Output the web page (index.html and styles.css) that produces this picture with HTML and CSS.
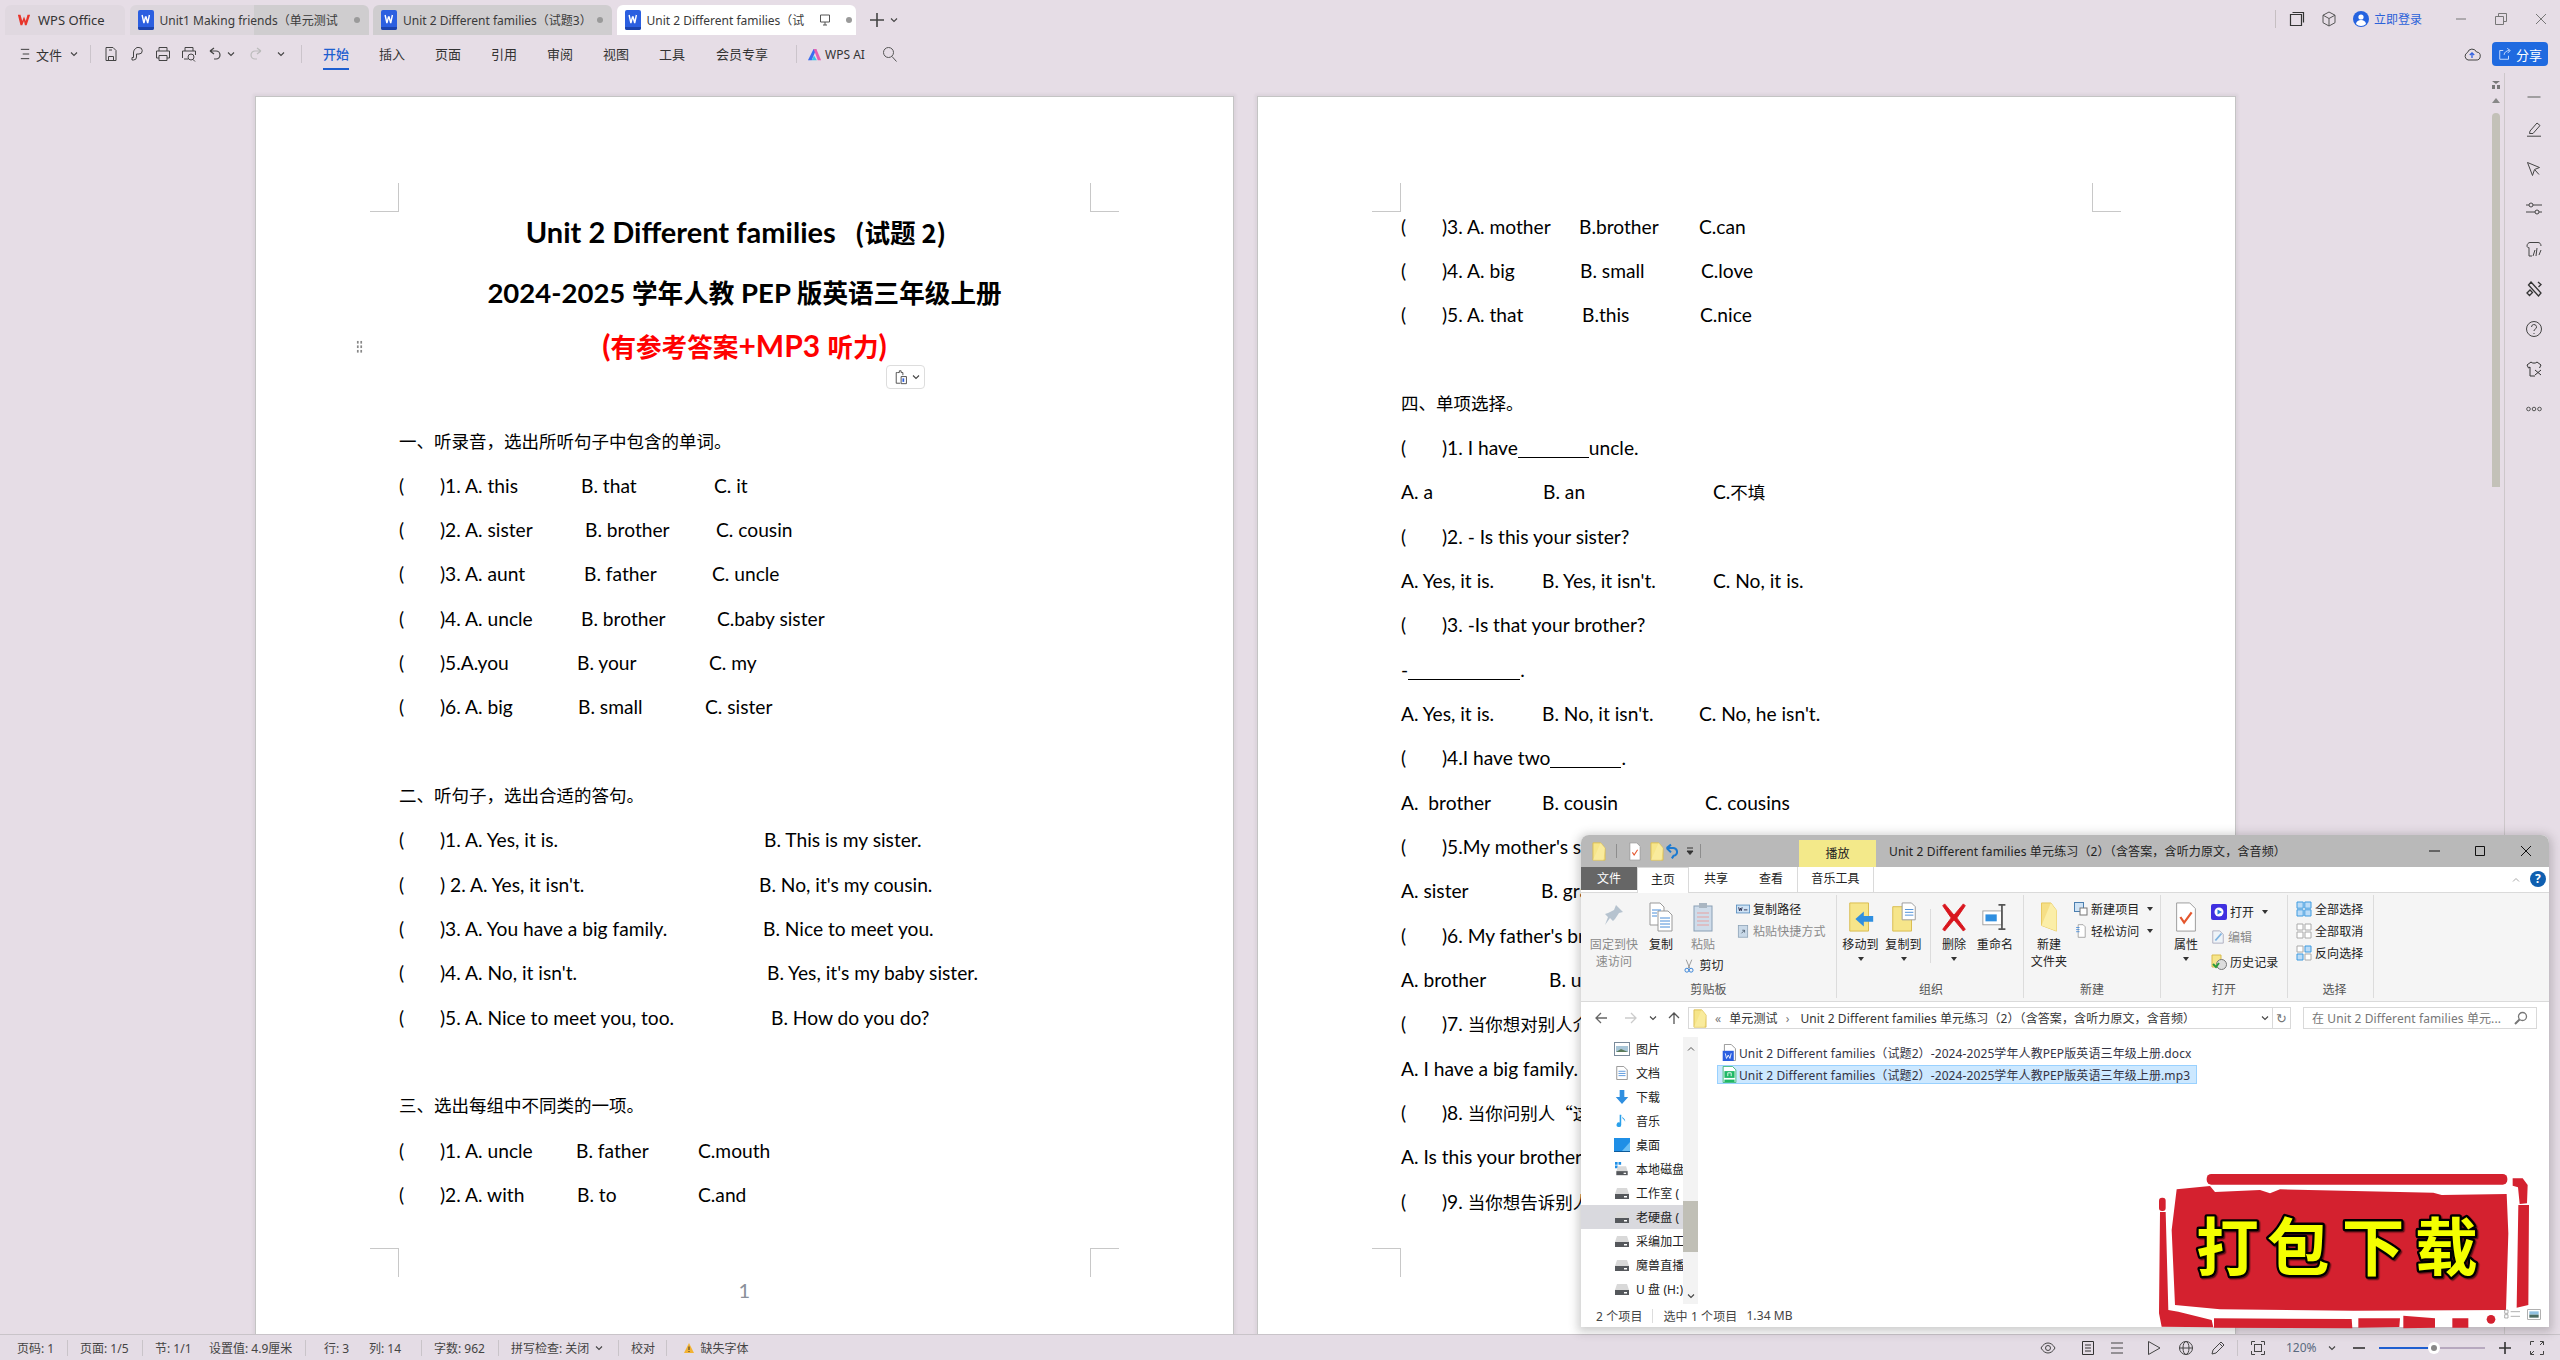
FILE: index.html
```html
<!DOCTYPE html>
<html lang="zh-CN">
<head>
<meta charset="utf-8">
<title>WPS Office</title>
<link rel="stylesheet" href="styles.css">
</head>
<body>
<svg class="defs" width="0" height="0" aria-hidden="true">
  <symbol id="word" viewBox="0 0 16 20"><path d="M2 0h12a2 2 0 0 1 2 2v16a2 2 0 0 1-2 2H2a2 2 0 0 1-2-2V2a2 2 0 0 1 2-2z" fill="#2b5fe0"/><path d="M0 17h16v1a2 2 0 0 1-2 2H2a2 2 0 0 1-2-2z" fill="#1b43ad"/><path d="M3.500 5l1.800 8 1.600-6h.6l1.600 6 1.700-8" transform="translate(.6 0)" fill="none" stroke="#fff" stroke-width="1.400"/></symbol>
  <symbol id="fold" viewBox="0 0 16 22"><path d="M1 1h9l5 6v14H1z" fill="#f6e58a" stroke="#d9bb4c"/><path d="M10 1l5 6-2 14H1" fill="#fbeea8" opacity=".6"/></symbol>
  <symbol id="drive" viewBox="0 0 16 14"><path d="M3 2h10l2 6H1z" fill="#d9d9d9"/><rect x="1" y="8" width="14" height="5" fill="#55585c"/><rect x="10" y="10" width="3" height="1.500" fill="#fff"/></symbol>
  <symbol id="chev" viewBox="0 0 8 8"><path d="M1 2.500l3 3 3-3" fill="none" stroke="#444" stroke-width="1.100"/></symbol>
  <symbol id="grid" viewBox="0 0 16 16"><path d="M1 1h6.200v6.200H1zM8.800 1H15v6.200H8.800zM1 8.800h6.200V15H1zM8.800 8.800H15V15H8.800z" fill="#bcdcf7" stroke="#3f9be0"/></symbol>
</svg>

<div class="app">
  <header class="tabbar">
    <div class="tab home"><svg class="i14" viewBox="0 0 16 14"><path d="M1 1h3l2 7 2-5 2 5 2-7h3l-4 12h-2L8 8l-2 5H4z" fill="#e8352b"/></svg><span>WPS Office</span></div>
    <div class="tab doc dim fade"><svg class="wicon"><use href="#word"/></svg><span class="tabtext">Unit1 Making friends（单元测试</span><i class="dot"></i></div>
    <div class="tab doc dim"><svg class="wicon"><use href="#word"/></svg><span class="tabtext">Unit 2 Different families（试题3）</span><i class="dot"></i></div>
    <div class="tab doc active"><svg class="wicon"><use href="#word"/></svg><span class="tabtext short">Unit 2 Different families（试</span><svg class="i12 mon" viewBox="0 0 12 12"><path d="M1.500 1h9v7h-9zM4 11h4M6 8v3" fill="none" stroke="#555"/></svg><i class="dot"></i></div>
    <svg class="plus" viewBox="0 0 16 16"><path d="M8 1v14M1 8h14" stroke="#444" stroke-width="1.600"/></svg>
    <svg class="i8 chevgap"><use href="#chev"/></svg>
    <div class="tabright">
      <i class="vsep"></i>
      <svg class="i16" viewBox="0 0 16 16"><path d="M1.500 3.500h11v11h-11zM3.500 1.500h11v10" fill="none" stroke="#333" stroke-width="1.200"/></svg>
      <svg class="i16" viewBox="0 0 16 16"><path d="M8 1l6 3.200v7.500L8 15l-6-3.300V4.200zM2 4.200L8 7.500l6-3.300M8 7.500V15" fill="none" stroke="#555" stroke-width="1"/></svg>
      <svg class="avatar" viewBox="0 0 16 16"><circle cx="8" cy="8" r="8" fill="#2563e0"/><circle cx="8" cy="6" r="2.600" fill="#fff"/><path d="M3 13c.5-3 2.500-4 5-4s4.500 1 5 4a7 7 0 0 1-10 0z" fill="#fff"/></svg>
      <span class="login">立即登录</span>
      <svg class="i14 win1" viewBox="0 0 14 14"><path d="M2 7h10" stroke="#777"/></svg>
      <svg class="i14 win2" viewBox="0 0 14 14"><path d="M1.500 4.500h8v8h-8zM4.500 4.500v-3h8v8h-3" fill="none" stroke="#777"/></svg>
      <svg class="i14 win3" viewBox="0 0 14 14"><path d="M2 2l10 10M12 2L2 12" stroke="#777"/></svg>
    </div>
  </header>

  <nav class="toolbar">
    <svg class="i14 ham" viewBox="0 0 14 14"><path d="M2 2h9M4 7h7M2 12h9" stroke="#333"/></svg>
    <span class="file">文件</span><svg class="i8 filechev"><use href="#chev"/></svg>
    <i class="tsep s1"></i>
    <span class="qa"><svg class="i16" viewBox="0 0 16 16"><path d="M3 1.500h7l3 3v10H3zM5.500 14.500v-4h5v4M6 4h3" fill="none" stroke="#444"/></svg></span>
    <span class="qa"><svg class="i16" viewBox="0 0 16 16"><path d="M8 1.500h2a3 3 0 0 1 0 6.500H7.500v3a3 3 0 0 1-3 3H3v-2.500h1.500V8a6.500 6.500 0 0 1 3.500-6.500z" fill="none" stroke="#444"/></svg></span>
    <span class="qa"><svg class="i16" viewBox="0 0 16 16"><path d="M4 5V1.500h8V5M1.500 5h13v7H12M4 12H1.500V5M4 9.500h8v5H4z" fill="none" stroke="#444"/></svg></span>
    <span class="qa"><svg class="i16" viewBox="0 0 16 16"><path d="M4 5V1.500h8V5M1.500 12V5h13v4M7 13H3" fill="none" stroke="#444"/><circle cx="10" cy="11" r="3" fill="none" stroke="#444"/><path d="M12 13.500l2 2" stroke="#444"/></svg></span>
    <span class="qa"><svg class="i16" viewBox="0 0 16 16"><path d="M3 5l4-3M3 5l4 3M3 5h6a4 4 0 0 1 0 8H7" fill="none" stroke="#444" stroke-width="1.200"/></svg></span>
    <svg class="i8 uc"><use href="#chev"/></svg>
    <span class="qa r"><svg class="i16" viewBox="0 0 16 16"><path d="M13 5L9 2M13 5L9 8M13 5H7a4 4 0 0 0 0 8h2" fill="none" stroke="#bbb" stroke-width="1.200"/></svg></span>
    <svg class="i8 mc"><use href="#chev"/></svg>
    <i class="tsep s2"></i>
    <span class="rt on">开始</span><span class="rt">插入</span><span class="rt">页面</span><span class="rt">引用</span><span class="rt">审阅</span><span class="rt">视图</span><span class="rt">工具</span><span class="rt wide">会员专享</span>
    <i class="tsep s3"></i>
    <svg class="ailogo" viewBox="0 0 16 16"><path d="M1 14L7 2h3L5 14z" fill="#3b6cf0"/><path d="M7 2h3l5 12h-3.500z" fill="#e65fb0"/><path d="M5 14l2.500-5 3 5z" fill="#36c3e8"/></svg>
    <span class="ai">WPS AI</span>
    <svg class="i16 find" viewBox="0 0 16 16"><circle cx="6.500" cy="6.500" r="5" fill="none" stroke="#555"/><path d="M10 10.500l4.500 5" stroke="#555"/></svg>
    <div class="tbright">
      <svg class="cloud" viewBox="0 0 18 14"><path d="M5 13a4 4 0 0 1-.5-7.500A4.800 4.800 0 0 1 13.500 5 4 4 0 0 1 13 13z" fill="none" stroke="#444"/><path d="M9 11V6M6.800 8L9 5.800 11.200 8" fill="none" stroke="#3060e0" stroke-width="1.300"/></svg>
      <button class="share" type="button"><svg class="i14" viewBox="0 0 16 14"><path d="M6 3H2v10h10V9M7 8c0-3 3-5 6-5M10.500 .5L14 3l-3 3" fill="none" stroke="#dbe8ff"/></svg>分享</button>
    </div>
  </nav>

  <main class="work">
    <div class="canvas">
      <article class="page p1">
        <i class="mk tl"></i><i class="mk tr"></i><i class="mk bl"></i><i class="mk br"></i>
        <h1 class="t1">Unit 2 Different families<span class="zhb paren">(试题 2)</span></h1>
        <h2 class="t2">2024-2025 <span class="zhb">学年人教</span> PEP <span class="zhb">版英语三年级上册</span></h2>
        <h3 class="t3">(<span class="zhb">有参考答案</span>+MP3 <span class="zhb">听力</span>)</h3>
        <div class="lines first">
          <p class="row zh">一、听录音，选出所听句子中包含的单词。</p>
          <p class="row"><b class="o">(</b><span class="w141">)1. A. this</span><span class="w133">B. that</span><span>C. it</span></p>
          <p class="row"><b class="o">(</b><span class="w145">)2. A. sister</span><span class="w131">B. brother</span><span>C. cousin</span></p>
          <p class="row"><b class="o">(</b><span class="w144">)3. A. aunt</span><span class="w128">B. father</span><span>C. uncle</span></p>
          <p class="row"><b class="o">(</b><span class="w141">)4. A. uncle</span><span class="w136">B. brother</span><span>C.baby sister</span></p>
          <p class="row"><b class="o">(</b><span class="w137">)5.A.you</span><span class="w132">B. your</span><span>C. my</span></p>
          <p class="row"><b class="o">(</b><span class="w138">)6. A. big</span><span class="w127">B. small</span><span>C. sister</span></p>
          <p class="row"></p>
          <p class="row zh">二、听句子，选出合适的答句。</p>
          <p class="row"><b class="o">(</b><span class="w324">)1. A. Yes, it is.</span><span>B. This is my sister.</span></p>
          <p class="row"><b class="o">(</b><span class="w319">) 2. A. Yes, it isn't.</span><span>B. No, it's my cousin.</span></p>
          <p class="row"><b class="o">(</b><span class="w323">)3. A. You have a big family.</span><span>B. Nice to meet you.</span></p>
          <p class="row"><b class="o">(</b><span class="w327">)4. A. No, it isn't.</span><span>B. Yes, it's my baby sister.</span></p>
          <p class="row"><b class="o">(</b><span class="w331">)5. A. Nice to meet you, too.</span><span>B. How do you do?</span></p>
          <p class="row"></p>
          <p class="row zh">三、选出每组中不同类的一项。</p>
          <p class="row"><b class="o">(</b><span class="w136">)1. A. uncle</span><span class="w122">B. father</span><span>C.mouth</span></p>
          <p class="row"><b class="o">(</b><span class="w137">)2. A. with</span><span class="w121">B. to</span><span>C.and</span></p>
        </div>
        <span class="pageno">1</span>
        <i class="grip"></i>
        <button class="pastebtn" type="button"><svg class="i16" viewBox="0 0 16 18"><path d="M3 4h2V2h2v2h2v3M6 16H1.500V4H3M7 8.500h6v8H7z" fill="none" stroke="#444"/><path d="M9.500 10.500v4" stroke="#2b5fe0" stroke-width="2"/></svg><svg class="i8"><use href="#chev"/></svg></button>
      </article>

      <article class="page p2">
        <i class="mk tl"></i><i class="mk tr"></i><i class="mk bl"></i>
        <div class="lines">
          <p class="row"><b class="o">(</b><span class="w137">)3. A. mother</span><span class="w120">B.brother</span><span>C.can</span></p>
          <p class="row"><b class="o">(</b><span class="w138">)4. A. big</span><span class="w121">B. small</span><span>C.love</span></p>
          <p class="row"><b class="o">(</b><span class="w140">)5. A. that</span><span class="w118">B.this</span><span>C.nice</span></p>
          <p class="row"></p>
          <p class="row zh">四、单项选择。</p>
          <p class="row"><b class="o">(</b><span>)1. I have<u class="blank b71"></u>uncle.</span></p>
          <p class="row"><span class="w142">A. a</span><span class="w170">B. an</span><span>C.<span class="zh">不填</span></span></p>
          <p class="row"><b class="o">(</b><span>)2. - Is this your sister?</span></p>
          <p class="row"><span class="w141">A. Yes, it is.</span><span class="w171">B. Yes, it isn't.</span><span>C. No, it is.</span></p>
          <p class="row"><b class="o">(</b><span>)3. -Is that your brother?</span></p>
          <p class="row"><span>-<u class="blank b112"></u>.</span></p>
          <p class="row"><span class="w141">A. Yes, it is.</span><span class="w157">B. No, it isn't.</span><span>C. No, he isn't.</span></p>
          <p class="row"><b class="o">(</b><span>)4.I have two<u class="blank b71"></u>.</span></p>
          <p class="row"><span class="w141">A.&nbsp; brother</span><span class="w163">B. cousin</span><span>C. cousins</span></p>
          <p class="row"><b class="o">(</b><span>)5.My mother's sister is my</span></p>
          <p class="row"><span class="w140">A. sister</span><span>B. grandmother</span></p>
          <p class="row"><b class="o">(</b><span>)6. My father's brother is my</span></p>
          <p class="row"><span class="w148">A. brother</span><span>B. uncle</span></p>
          <p class="row"><b class="o">(</b><span>)7. <span class="zh">当你想对别人介绍</span></span></p>
          <p class="row"><span>A. I have a big family.</span></p>
          <p class="row"><b class="o">(</b><span>)8. <span class="zh">当你问别人“这</span></span></p>
          <p class="row"><span>A. Is this your brother?</span></p>
          <p class="row"><b class="o">(</b><span>)9. <span class="zh">当你想告诉别人</span></span></p>
        </div>
      </article>
    </div>

    <div class="vscroll">
      <svg class="i8 vs1" viewBox="0 0 8 8"><path d="M0 0h8L4 3zM0 4h3v4H0zM5 4h3v4H5z" fill="#777"/></svg>
      <svg class="i8 vs2" viewBox="0 0 8 8"><path d="M4 1l4 5H0z" fill="#888"/></svg>
      <i class="thumb"></i>
    </div>

    <aside class="rail">
      <svg class="ri dash" viewBox="0 0 16 16"><path d="M1.500 8h13" stroke="#888" stroke-width="1.500"/></svg>
      <svg class="ri" viewBox="0 0 16 16"><path d="M4 10l7-8 3 2.500-7 8H3.500zM1 15.200h14" fill="none" stroke="#444"/></svg>
      <svg class="ri" viewBox="0 0 16 16"><path d="M1.500 1.500l12 5-5 2-2 6z M9 9l4 4.500" fill="none" stroke="#444"/></svg>
      <svg class="ri" viewBox="0 0 16 16"><circle cx="5" cy="4" r="2" fill="none" stroke="#444"/><circle cx="11" cy="11" r="2" fill="none" stroke="#444"/><path d="M0 4h3M7 4h9M0 11h9M13 11h3" stroke="#444"/></svg>
      <svg class="ri" viewBox="0 0 16 16"><path d="M1 5c0-2 1.500-3.500 3-3.500h8c1.500 0 3 1 3 3.500M1 5c0 1 1 2 2 1.500V15h3M7 15l2-6M10 15l1-8M13 14l2-5" fill="none" stroke="#444"/></svg>
      <svg class="ri" viewBox="0 0 16 16"><path d="M5 1l10 11-2.500 3L2.500 4zM1 12l3-3 2.500 2.500-3 3zM12 1l3 2.500-2.500 2.500" fill="none" stroke="#333" stroke-width="1.300"/></svg>
      <svg class="ri" viewBox="0 0 16 16"><circle cx="8" cy="8" r="7.500" fill="none" stroke="#444"/><path d="M5.500 6a2.500 2.500 0 1 1 3.500 2.300c-.7.4-1 .8-1 1.700M8 12v1" fill="none" stroke="#444"/></svg>
      <svg class="ri" viewBox="0 0 16 16"><path d="M5 1L1 4l1.500 3L4 6v9h5M11 1l4 3-1.500 3M5 1c1 1.500 5 1.500 6 0" fill="none" stroke="#333"/><path d="M9 9l6 5M15 9l-6 5" stroke="#333"/></svg>
      <svg class="ri" viewBox="0 0 16 16"><g fill="none" stroke="#555"><circle cx="2.500" cy="8" r="1.800"/><circle cx="8" cy="8" r="1.800"/><circle cx="13.500" cy="8" r="1.800"/></g></svg>
    </aside>
  </main>

  <footer class="status">
    <span class="w50">页码: 1</span><i class="ss"></i><span class="w62">页面: 1/5</span><i class="ss"></i><span class="w54">节: 1/1</span><span class="w96">设置值: 4.9厘米</span><i class="ss m18"></i><span class="w45">行: 3</span><span class="w52">列: 14</span><i class="ss"></i><span class="w64">字数: 962</span><i class="ss"></i><span class="spell">拼写检查: 关闭<svg class="i8 stchev"><use href="#chev"/></svg></span><i class="ss"></i><span class="w35">校对</span><i class="ss"></i>
    <svg class="warn" viewBox="0 0 12 12"><path d="M6 1l5 10H1z" fill="#f2b233"/><path d="M6 4.500v3.500M6 9v1" stroke="#333"/></svg><span>缺失字体</span>
    <div class="stright">
      <svg class="si" viewBox="0 0 16 16"><path d="M1 8c2-3.500 4.500-5 7-5s5 1.500 7 5c-2 3.500-4.500 5-7 5s-5-1.500-7-5z" fill="none" stroke="#444"/><circle cx="8" cy="8" r="2.500" fill="none" stroke="#444"/></svg>
      <svg class="si sp24" viewBox="0 0 16 16"><path d="M2.500 1.500h11v13h-11zM5 5h6M5 8h6M5 11h6" fill="none" stroke="#333"/></svg>
      <svg class="si sp13" viewBox="0 0 16 16"><path d="M2 3h12M2 8h12M2 13h12" stroke="#444"/></svg>
      <svg class="si sp21" viewBox="0 0 16 16"><path d="M2.500 1.500L14 8 2.500 14.500z" fill="none" stroke="#444"/></svg>
      <svg class="si sp16" viewBox="0 0 16 16"><circle cx="8" cy="8" r="6.500" fill="none" stroke="#444"/><ellipse cx="8" cy="8" rx="3" ry="6.500" fill="none" stroke="#444"/><path d="M1.500 8h13" stroke="#444"/></svg>
      <svg class="si sp16" viewBox="0 0 16 16"><path d="M2 14l1-4 8-8 3 3-8 8zM9.500 3.500l3 3" fill="none" stroke="#444"/></svg>
      <i class="sr"></i>
      <svg class="si" viewBox="0 0 16 16"><path d="M1.500 5V1.500H5M11 1.500h3.500V5M14.500 11v3.500H11M5 14.500H1.500V11" fill="none" stroke="#444"/><rect x="4.500" y="4.500" width="7" height="7" fill="none" stroke="#444"/></svg>
      <span class="zoomv">120%</span>
      <svg class="i8 zc"><use href="#chev"/></svg>
      <svg class="si zm" viewBox="0 0 16 16"><path d="M2 8h12" stroke="#333" stroke-width="1.600"/></svg>
      <span class="slider"><i class="fill"></i><i class="knob"></i></span>
      <svg class="si zp" viewBox="0 0 16 16"><path d="M2 8h12M8 2v12" stroke="#333" stroke-width="1.600"/></svg>
      <svg class="si sp16" viewBox="0 0 16 16"><path d="M1.500 5V1.500H5M11 1.500h3.500V5M14.500 11v3.500H11M5 14.500H1.500V11M5 11l-3 3M11 5l3-3" fill="none" stroke="#444"/></svg>
    </div>
  </footer>
</div>

<section class="explorer">
  <div class="ex-title">
    <svg class="f16"><use href="#fold"/></svg><i class="exsep"></i>
    <svg class="qic" viewBox="0 0 14 22"><path d="M1 1h8l4 4v16H1z" fill="#fff" stroke="#999"/><path d="M4 12l2 3 4-6" fill="none" stroke="#e4572e" stroke-width="1.300"/></svg>
    <svg class="f16"><use href="#fold"/></svg>
    <svg class="qic" viewBox="0 0 16 22"><path d="M3 7l5-4M3 7l5 5M3 7h7a4 4 0 0 1 1 9l-2 3" fill="none" stroke="#1d7ad0" stroke-width="2.400"/></svg>
    <svg class="i8" viewBox="0 0 8 8"><path d="M1 1h6M1 4h6L4 7.500z" stroke="#333" fill="#333"/></svg><i class="exsep"></i>
    <span class="ctx">播放</span>
    <span class="ex-name">Unit 2 Different families 单元练习（2）（含答案，含听力原文，含音频）</span>
    <svg class="i14 w1" viewBox="0 0 14 14"><path d="M1 7h11" stroke="#111"/></svg>
    <svg class="i14 w2" viewBox="0 0 14 14"><path d="M2.500 2.500h9v9h-9z" fill="none" stroke="#111"/></svg>
    <svg class="i14 w3" viewBox="0 0 14 14"><path d="M2 2l10 10M12 2L2 12" stroke="#111"/></svg>
  </div>
  <div class="ex-tabs">
    <span class="et filet">文件</span><span class="et homet">主页</span><span class="et s">共享</span><span class="et s v">查看</span><span class="et music">音乐工具</span>
    <svg class="i8 up" viewBox="0 0 8 8"><path d="M1 5.500l3-3 3 3" fill="none" stroke="#aaa"/></svg>
    <span class="help">?</span>
  </div>
  <div class="ribbon">
    <div class="grp g1">
      <div class="gbody">
        <div class="big c66 off"><svg class="bi" viewBox="0 0 24 30"><path d="M14 3l7 7-4 1-4 6-2 2-3-3-5 7 3-8-3-3 3-1 6-3z" fill="#b6c3cf"/></svg><span>固定到快<br>速访问</span></div>
        <div class="big c28"><svg class="bi" viewBox="0 0 24 30"><path d="M1 1h10l4 4v18H1z" fill="#fff" stroke="#999"/><path d="M9 9h10l4 4v16H9z" fill="#fff" stroke="#999"/><path d="M3 8h9M3 11h5M3 14h5M11 16h10M11 19h10M11 22h10M11 25h10" stroke="#4a8ed8"/></svg><span>复制</span></div>
        <div class="big c56 off"><svg class="bi" viewBox="0 0 24 30"><rect x="3" y="4" width="18" height="25" fill="#cfdcea" stroke="#8aa0b5"/><rect x="8" y="1" width="8" height="5" fill="#aab6c2"/><path d="M6 11h12M6 15h12M6 19h12M6 23h12" stroke="#e8a0a0"/></svg><span>粘贴</span>
          <span class="cut"><svg class="i14" viewBox="0 0 14 20"><path d="M3 1l5 12M11 1L6 13" stroke="#777"/><circle cx="4" cy="16" r="2.800" fill="none" stroke="#2a7ad5" stroke-width="1.300"/><circle cx="10" cy="16" r="2.800" fill="none" stroke="#2a7ad5" stroke-width="1.300"/></svg><em>剪切</em></span></div>
        <div class="small sp5">
          <span class="sm"><svg class="i14" viewBox="0 0 16 12"><rect x=".5" y="1.500" width="15" height="9" fill="#cfe3f5" stroke="#5b8fc0"/><path d="M3 4l1 4 1-3 1 3 1-4M9 7h4" stroke="#224" fill="none"/></svg>复制路径</span>
          <span class="sm off"><svg class="i14" viewBox="0 0 14 18"><rect x="1" y="2" width="12" height="15" fill="#c9d9e8" stroke="#8aa0b5"/><path d="M5 12l4-4M6 8h3v3" stroke="#456" fill="none"/></svg>粘贴快捷方式</span>
        </div>
      </div>
      <span class="glabel">剪贴板</span>
    </div>
    <div class="grp g2">
      <div class="gbody">
        <div class="big c44"><svg class="bi" viewBox="0 0 26 32"><path d="M1 1h20v30H1z" fill="#f6e58a" stroke="#d9bb4c"/><path d="M26 15h-10v-5l-9 8 9 8v-5h10z" fill="#2f8fe0"/></svg><span>移动到</span><svg class="i8 dn" viewBox="0 0 8 8"><path d="M1 2h6L4 6z" fill="#333"/></svg></div>
        <div class="big c44"><svg class="bi" viewBox="0 0 26 32"><path d="M1 5h20v26H1z" fill="#f6e58a" stroke="#d9bb4c"/><path d="M11 1h10l4 4v14H11z" fill="#fff" stroke="#999"/><path d="M14 8h9M14 11h9M14 14h9" stroke="#4a8ed8"/></svg><span>复制到</span><svg class="i8 dn" viewBox="0 0 8 8"><path d="M1 2h6L4 6z" fill="#333"/></svg></div>
        <i class="rsep"></i>
        <div class="big c38"><svg class="bi" viewBox="0 0 26 32"><path d="M3 2l10 12L23 2l2 2-9 13 9 12-2 2-10-12L3 31l-2-2 9-12L1 4z" fill="#d9161e" stroke="#d9161e"/></svg><span>删除</span><svg class="i8 dn" viewBox="0 0 8 8"><path d="M1 2h6L4 6z" fill="#333"/></svg></div>
        <div class="big c40"><svg class="bi" viewBox="0 0 30 32"><rect x="1" y="9" width="22" height="16" fill="#fff" stroke="#999"/><rect x="4" y="13" width="13" height="8" fill="#2f8fe0"/><path d="M23 2v28M19 2h8M19 30h8" stroke="#555" stroke-width="2" fill="none"/></svg><span>重命名</span></div>
      </div>
      <span class="glabel">组织</span>
    </div>
    <div class="grp g3">
      <div class="gbody">
        <div class="big c50"><svg class="bi" viewBox="0 0 26 32"><path d="M5 1h10l6 8v22L5 25z" fill="#f6df86" stroke="#e5c65c"/><path d="M5 25l16 6V9L15 1" fill="#fbeea8"/></svg><span>新建<br>文件夹</span></div>
        <div class="small">
          <span class="sm"><svg class="i14" viewBox="0 0 14 14"><rect x=".5" y=".5" width="9" height="9" fill="#cfe3f5" stroke="#4b7fb0"/><rect x="6" y="6" width="7" height="7" fill="#fff" stroke="#777"/></svg>新建项目<svg class="i8 ml4" viewBox="0 0 8 8"><path d="M1 2h6L4 6z" fill="#333"/></svg></span>
          <span class="sm"><svg class="i14" viewBox="0 0 14 20"><path d="M3 1h7l3 3v15H3z" fill="#fff" stroke="#888"/><path d="M0 5h5M0 8h5M0 11h5" stroke="#2a7ad5"/></svg>轻松访问<svg class="i8 ml4" viewBox="0 0 8 8"><path d="M1 2h6L4 6z" fill="#333"/></svg></span>
        </div>
      </div>
      <span class="glabel">新建</span>
    </div>
    <div class="grp g4">
      <div class="gbody">
        <div class="big c50"><svg class="bi" viewBox="0 0 24 32"><path d="M2 1h14l6 6v24H2z" fill="#fff" stroke="#999"/><path d="M6 16l4 6 8-11" fill="none" stroke="#e4572e" stroke-width="2.400"/></svg><span>属性</span><svg class="i8 dn" viewBox="0 0 8 8"><path d="M1 2h6L4 6z" fill="#333"/></svg></div>
        <div class="small">
          <span class="sm"><svg class="i16" viewBox="0 0 16 16"><rect width="16" height="16" rx="2" fill="#3f30e0"/><circle cx="8" cy="8" r="4.500" fill="#fff"/><path d="M6.500 5.500L11 8l-4.500 2.500z" fill="#2a7ad5"/></svg>打开<svg class="i8 ml4" viewBox="0 0 8 8"><path d="M1 2h6L4 6z" fill="#333"/></svg></span>
          <span class="sm off"><svg class="i14" viewBox="0 0 14 16"><path d="M1 1h8l4 4v10H1z" fill="#eef3f8" stroke="#aab"/><path d="M4 12l7-8" stroke="#7fb3e0" stroke-width="2"/></svg>编辑</span>
          <span class="sm"><svg class="i16" viewBox="0 0 16 16"><path d="M1 1h9v12H1z" fill="#f6e58a" stroke="#d9bb4c"/><circle cx="10.500" cy="10.500" r="5" fill="#ddd" stroke="#777"/><path d="M2 10l3 3 3-4" stroke="#2a9a3a" stroke-width="2" fill="none"/></svg>历史记录</span>
        </div>
      </div>
      <span class="glabel">打开</span>
    </div>
    <div class="grp g5">
      <div class="gbody">
        <div class="small">
          <span class="sm"><svg class="i16"><use href="#grid"/></svg>全部选择</span>
          <span class="sm"><svg class="i16" viewBox="0 0 16 16"><path d="M1 1h6v6H1zM9 1h6v6H9zM1 9h6v6H1zM9 9h6v6H9z" fill="#fff" stroke="#aaa"/></svg>全部取消</span>
          <span class="sm"><svg class="i16" viewBox="0 0 16 16"><path d="M1 1h6v6H1zM9 9h6v6H9z" fill="#fff" stroke="#aaa"/><path d="M9 1h6v6H9zM1 9h6v6H1z" fill="#bcdcf7" stroke="#3f9be0"/></svg>反向选择</span>
        </div>
      </div>
      <span class="glabel">选择</span>
    </div>
  </div>
  <div class="addr">
    <svg class="nv back" viewBox="0 0 14 14"><path d="M13 7H2M7 2L2 7l5 5" fill="none" stroke="#666" stroke-width="1.300"/></svg>
    <svg class="nv fwd" viewBox="0 0 14 14"><path d="M1 7h11M7 2l5 5-5 5" fill="none" stroke="#ccc" stroke-width="1.300"/></svg>
    <svg class="i8 nd"><use href="#chev"/></svg>
    <svg class="nv upb" viewBox="0 0 14 14"><path d="M7 13V2M2 7l5-5 5 5" fill="none" stroke="#555" stroke-width="1.300"/></svg>
    <div class="pathbox"><svg class="f16"><use href="#fold"/></svg><span class="crumb">«</span><span>单元测试</span><span class="crumb">›</span><span class="last">Unit 2 Different families 单元练习（2）（含答案，含听力原文，含音频）</span><svg class="i8 pdn"><use href="#chev"/></svg></div>
    <div class="refresh">↻</div>
    <div class="search"><span>在 Unit 2 Different families 单元...</span><svg class="i14" viewBox="0 0 14 14"><circle cx="8.500" cy="5.500" r="4" fill="none" stroke="#777" stroke-width="1.300"/><path d="M5.500 8.500L1 13" stroke="#777" stroke-width="2"/></svg></div>
  </div>
  <div class="ex-body">
    <div class="tree">
      <span class="ti"><svg class="tic" viewBox="0 0 16 14"><rect x=".5" y=".5" width="15" height="13" fill="#fff" stroke="#7a8a9a"/><path d="M2 4h12v6H2z" fill="#a9c6d8"/><path d="M2 10l5-3 7 3z" fill="#5a7a5a"/></svg>图片</span>
      <span class="ti"><svg class="tic" viewBox="0 0 14 16"><path d="M1 .5h8l4 4v11H1z" fill="#fff" stroke="#888"/><path d="M3 6h8M3 8.500h8M3 11h8" stroke="#4a8ed8"/></svg>文档</span>
      <span class="ti"><svg class="tic" viewBox="0 0 16 18"><path d="M5 0h6v9h5l-8 9-8-9h5z" fill="#2f8fe0"/></svg>下载</span>
      <span class="ti"><svg class="tic" viewBox="0 0 14 18"><path d="M6 1v13a3 3 0 1 1-2-3V1h2c0 4 6 4 5 9-.5-3-3-4-3-4" fill="#2aa0ea"/></svg>音乐</span>
      <span class="ti"><svg class="tic" viewBox="0 0 16 14"><rect width="16" height="13" fill="#1f8fe6"/><path d="M0 13h16v1H0z" fill="#0c5a9a"/><path d="M8 13l8-9v9z" fill="#6cc0f5"/></svg>桌面</span>
      <span class="ti"><svg class="tic" viewBox="0 0 16 16"><path d="M0 0h3v3H0zM4 0h3v3H4zM0 4h3v3H0z" fill="#1f8fe6"/><use href="#drive" y="3" width="16" height="13"/></svg>本地磁盘</span>
      <span class="ti"><svg class="tic"><use href="#drive"/></svg>工作室 (</span>
      <span class="ti sel"><svg class="tic"><use href="#drive"/></svg>老硬盘 (</span>
      <span class="ti"><svg class="tic"><use href="#drive"/></svg>采编加工</span>
      <span class="ti"><svg class="tic"><use href="#drive"/></svg>魔兽直播</span>
      <span class="ti"><svg class="tic"><use href="#drive"/></svg>U 盘 (H:)</span>
    </div>
    <div class="treebar"><svg class="i8" viewBox="0 0 8 8"><path d="M1 5.500l3-3 3 3" fill="none" stroke="#555"/></svg><i class="tb-thumb"></i><svg class="i8"><use href="#chev"/></svg></div>
    <div class="files">
      <div class="frow"><svg class="fic" viewBox="0 0 16 20"><path d="M2 .5h8l5 5v14H2z" fill="#fff" stroke="#888"/><rect y="8" width="13" height="12" fill="#2b5fe0"/><path d="M3 11l1.500 6 2-4 2 4L10 11" fill="none" stroke="#fff"/></svg><span>Unit 2 Different families（试题2）-2024-2025学年人教PEP版英语三年级上册.docx</span></div>
      <div class="frow picked"><svg class="fic" viewBox="0 0 16 20"><path d="M.5.5h11l4 4v15H.5z" fill="#fff" stroke="#2db36b"/><rect x="2" y="6" width="12" height="8" fill="#1fb866"/><path d="M6 12V8h4v4" fill="none" stroke="#fff"/><path d="M2 16h12v3H2z" fill="#1fb866"/></svg><span>Unit 2 Different families（试题2）-2024-2025学年人教PEP版英语三年级上册.mp3</span></div>
    </div>
  </div>
  <div class="ex-status"><span>2 个项目</span><i class="exbar"></i><span>选中 1 个项目</span><span class="size">1.34 MB</span></div>
</section>

<svg class="stamp" viewBox="0 0 1260 630">
  <g fill="#d4212f">
    <path d="M110 118l100-10 15 18 135-6 30 10 30-12 460 10 25 7 195-3 5 118-7 230-458 2-400-4-135-13-10-225z"/>
    <rect x="200" y="72" width="902" height="32" rx="14"/>
    <rect x="57" y="143" width="20" height="40" rx="9"/>
    <path d="M60 186h17l8 294 30 5 100 25 5 22-155-2-8-40z"/>
    <path d="M222 505l413 2 2 28-415-2zM655 505h125l-2 26-123 2zM790 497l95 8v28l-95 2zM937 505h48v28h-48z"/>
    <circle cx="1053" cy="508" r="13"/>
    <path d="M1118 85h30l15 20-2 55-22 2-5-50-16-5zM1135 165h32l-2 300-35 8z"/>
  </g>
  <text class="stamp-t" x="168 380 605 825" y="360">打包下载</text>
  <g fill="none" stroke="#8a8a8a" stroke-width="2">
    <path d="M1094 480h10v10h-10zM1094 494h10v10h-10zM1112 485h28M1112 499h28"/>
    <rect x="1163" y="479" width="38" height="29" fill="#fff"/>
  </g>
  <path d="M1168 484h28v10h-28z" fill="#8fc0e0"/><path d="M1168 494h28v9h-28z" fill="#4a6a60"/>
</svg>
</body>
</html>
```

FILE: styles.css
```css
* { box-sizing: border-box; }
html, body { margin: 0; height: 100%; overflow: hidden; }
body { background: #e6dde6; color: #333; font: 12px "Noto Sans", "Noto Sans CJK SC", sans-serif; position: relative; }
i, em { font-style: normal; }
svg { display: block; flex: none; }
.defs { position: absolute; }
.i8 { width: 8px; height: 8px; }
.i12 { width: 12px; height: 12px; }
.i14 { width: 14px; height: 14px; }
.i16 { width: 16px; height: 16px; }
.app { display: flex; flex-direction: column; height: 1360px; }

/* tab strip */
.tabbar { height: 36px; flex: none; display: flex; align-items: flex-start; gap: 4.500px; padding: 5px 0 0 5px; }
.tab { height: 30px; width: 239px; border-radius: 6px 6px 0 0; display: flex; align-items: center; white-space: nowrap; overflow: hidden; }
.tab.home { width: 120px; padding-left: 12px; gap: 7px; background: #e0d8e0; font-size: 13px; }
.tab.doc { padding-left: 8px; gap: 6px; }
.dim { background: #cfcdcf; }
.fade { background: linear-gradient(90deg, #dcd6dc 52%, #cfcdcf 52%); }
.active { background: #fff; }
.wicon { width: 16px; height: 20px; }
.tabtext { width: 184px; color: #3a3a3a; }
.tabtext.short { width: 160px; }
.mon { margin-left: 6px; }
.dot { width: 6px; height: 6px; border-radius: 50%; background: #9a9a9a; margin-left: 4px; }
.mon + .dot { margin-left: 9px; }
.plus { width: 16px; height: 16px; margin: 7px 0 0 9px; }
.chevgap { margin: 11px 0 0 0; }
.tabright { margin-left: auto; display: flex; align-items: center; height: 28px; padding-right: 12px; }
.vsep { width: 1px; height: 18px; background: #c6bfc2; margin-right: 13px; }
.tabright .i16 { margin-right: 16px; }
.avatar { width: 16px; height: 16px; }
.login { color: #2b62d9; margin-left: 5px; width: 48px; }
.win1 { margin-left: 32px; }
.win2 { margin-left: 26px; }
.win3 { margin-left: 26px; }

/* ribbon header */
.toolbar { height: 36px; flex: none; display: flex; align-items: center; position: relative; padding-left: 19px; font-size: 13px; }
.ham { width: 13px; }
.file { margin-left: 4px; width: 27px; }
.filechev { margin-left: 7px; }
.tsep { width: 1px; height: 18px; background: #cbc4cb; }
.s1 { margin: 0 7px 0 12px; }
.qa { width: 26px; display: flex; justify-content: center; }
.uc { margin-left: -1px; }
.qa.r { margin-left: 8px; }
.mc { margin-left: 8px; }
.s2 { margin: 0 6px 0 16px; }
.rt { width: 56px; text-align: center; line-height: 30px; position: relative; }
.rt.on { color: #1e5fd0; font-weight: 500; }
.rt.on::after { content: ""; position: absolute; left: 15px; right: 15px; bottom: -1px; height: 2px; background: #1e5fd0; }
.rt.wide { width: 84px; }
.s3 { margin: 0 10px 0 12px; }
.ailogo { width: 15px; height: 15px; }
.ai { margin-left: 3px; width: 44px; font-size: 12px; }
.find { margin-left: 13px; }
.tbright { margin-left: auto; display: flex; align-items: center; padding-right: 12px; gap: 11px; }
.cloud { width: 18px; height: 14px; }
.share { width: 56px; height: 24px; border: 0; border-radius: 4px; background: #1f6ae0; color: #fff; font: 13px "Noto Sans CJK SC", sans-serif; display: flex; align-items: center; justify-content: center; gap: 4px; padding: 0; }

/* document area */
.work { flex: 1; min-height: 0; display: flex; position: relative; overflow: hidden; }
.canvas { width: 2491px; flex: none; display: flex; gap: 23px; padding: 24px 0 0 255px; overflow: hidden; }
.page { position: relative; width: 979px; height: 1300px; flex: none; background: #fff; border: 1px solid #c4c4c4; box-shadow: 0 0 3px 2px rgba(0,0,0,.05); color: #000; font: 19.200px/44.330px Lato, "Noto Sans CJK SC", sans-serif; }
.p1 { padding: 105px 143px 0; }
.p2 { padding: 107.500px 143px 0; }
.mk { position: absolute; width: 29px; height: 29px; border: 0 solid #c8c8c8; }
.tl { left: 114px; top: 86px; border-width: 0 1px 1px 0; }
.tr { right: 114px; top: 86px; border-width: 0 0 1px 1px; }
.bl { left: 114px; top: 1151px; border-width: 1px 1px 0 0; }
.br { right: 114px; top: 1151px; border-width: 1px 0 0 1px; }
.t1, .t2, .t3 { margin: 0; text-align: center; font-weight: 700; white-space: nowrap; }
.t1 { font-size: 29px; line-height: 60px; margin-left: -17px; }
.t2 { font-size: 27.500px; line-height: 60px; }
.t3 { font-size: 30px; line-height: 44px; color: #f00; }
.zhb { font-size: 25.600px; font-family: "Noto Sans CJK SC", sans-serif; }
.paren { margin-left: 19px; }
.lines.first { margin-top: 51.500px; }
.row { margin: 0; height: 44.330px; display: flex; white-space: pre; }
.zh { font-size: 17.500px; font-family: "Noto Sans CJK SC", sans-serif; }
.row.zh { line-height: 41px; }
.o { font-weight: 400; width: 41px; flex: none; }
.row > span { flex: none; }
.blank { display: inline-block; height: 1px; border-bottom: 1px solid #000; text-decoration: none; vertical-align: -3px; }
.b71 { width: 71px; }
.b112 { width: 112px; }
.w118 { width: 118px; } .w120 { width: 120px; } .w121 { width: 121px; } .w122 { width: 122px; }
.w127 { width: 127px; } .w128 { width: 128px; } .w131 { width: 131px; } .w132 { width: 132px; }
.w133 { width: 133px; } .w136 { width: 136px; } .w137 { width: 137px; } .w138 { width: 138px; }
.w140 { width: 140px; } .w141 { width: 141px; } .w142 { width: 142px; } .w144 { width: 144px; }
.w145 { width: 145px; } .w148 { width: 148px; } .w157 { width: 157px; } .w163 { width: 163px; }
.w170 { width: 170px; } .w171 { width: 171px; } .w319 { width: 319px; } .w323 { width: 323px; }
.w324 { width: 324px; } .w327 { width: 327px; } .w331 { width: 331px; }
.pageno { position: absolute; left: 482.500px; top: 1170.500px; color: #8a8f99; font-size: 20px; }
.grip { position: absolute; left: 100px; top: 243px; width: 7px; height: 13px; background: radial-gradient(circle, #888 1.100px, transparent 1.300px) 0 0 / 3.500px 4.500px; }
.pastebtn { position: absolute; left: 630px; top: 268px; width: 39px; height: 24px; padding: 0 3px 0 7px; display: flex; align-items: center; gap: 2px; background: #fff; border: 1px solid #ddd; border-radius: 4px; }

/* right side */
.vscroll { width: 13px; flex: none; position: relative; }
.vs1 { position: absolute; left: 1px; top: 9px; }
.vs2 { position: absolute; left: 1px; top: 25px; }
.thumb { position: absolute; left: 1px; top: 41px; width: 8px; height: 374px; border-radius: 4px 4px 0 0; background: #c3c1b8; }
.rail { flex: 1; border-left: 1px solid #cdc7ca; margin-top: 1px; display: flex; flex-direction: column; align-items: center; gap: 24px; padding: 16px 0 0 3px; }
.ri { width: 16px; height: 16px; }
.ri.dash { margin-bottom: -8px; }

/* status bar */
.status { height: 26px; flex: none; border-top: 1px solid #c9c4c9; background: #e4dce5; display: flex; align-items: center; padding-left: 17px; color: #444; white-space: nowrap; }
.status > span { flex: none; }
.ss { width: 1px; height: 16px; background: #c9c4c9; margin-right: 12px; flex: none; }
.ss.m18 { margin-right: 18px; }
.w50 { width: 50px; } .w62 { width: 62px; } .w54 { width: 54px; } .w96 { width: 96px; }
.w45 { width: 45px; } .w52 { width: 52px; } .w64 { width: 64px; } .w35 { width: 35px; }
.spell { width: 107px; display: flex; align-items: center; }
.stchev { margin-left: 6px; }
.warn { width: 12px; height: 12px; margin: 0 5.500px 0 4px; }
.stright { margin-left: auto; display: flex; align-items: center; padding-right: 15px; }
.si { width: 16px; height: 16px; }
.sp13 { margin-left: 13px; } .sp16 { margin-left: 16px; } .sp21 { margin-left: 21px; } .sp24 { margin-left: 24px; }
.sr { width: 1px; height: 16px; background: #c9c4c9; margin: 0 12px 0 11px; }
.zoomv { margin-left: 20px; width: 32px; color: #5a6a80; }
.zc { margin-left: 10px; }
.zm { margin-left: 15px; }
.slider { width: 106px; height: 2px; margin-left: 12px; position: relative; background: #b7a9bf; }
.fill { position: absolute; left: 0; top: 0; width: 55px; height: 2px; background: #1f5fd0; }
.knob { position: absolute; left: 49px; top: -5px; width: 12px; height: 12px; border-radius: 50%; background: #fff; }
.knob::after { content: ""; position: absolute; left: 3px; top: 3px; width: 6px; height: 6px; border-radius: 50%; background: #888; }
.zp { margin-left: 12px; }

/* file explorer window */
.explorer { position: absolute; left: 1581px; top: 835px; width: 968px; height: 492px; background: #fff; box-shadow: 0 2px 10px 3px rgba(60,60,60,.25); border-radius: 8px 8px 0 0; color: #222; font: 12px "Noto Sans", "Noto Sans CJK SC", sans-serif; letter-spacing: .1px; display: flex; flex-direction: column; white-space: nowrap; }
.ex-title { height: 32px; flex: none; background: #b9b9b9; border-radius: 8px 8px 0 0; display: flex; align-items: center; padding-left: 11px; position: relative; }
.f16 { width: 14px; height: 19px; }
.qic { width: 14px; height: 19px; margin: 0 8px 0 0; }
.exsep { width: 1px; height: 14px; background: #8d8d8d; margin: 0 11px 0 10px; }
.ex-title .i8 + .exsep { margin: 0 0 0 6px; }
.ctx { align-self: flex-end; margin-left: 98px; width: 77px; height: 27px; line-height: 28px; background: #f3e98a; text-align: center; }
.ex-name { margin-left: 13px; color: #222; letter-spacing: .15px; }
.w1, .w2, .w3 { position: absolute; top: 9px; }
.w1 { right: 107px; } .w2 { right: 62px; } .w3 { right: 16px; }
.ex-tabs { height: 26px; flex: none; display: flex; border-bottom: 1px solid #dadada; position: relative; line-height: 24px; }
.et { text-align: center; }
.filet { width: 56px; height: 23px; background: #666; color: #fff; }
.homet { width: 52px; height: 26px; border: 1px solid #dadada; border-bottom: 0; background: #fff; margin-bottom: -1px; z-index: 1; }
.s { width: 54px; }
.s.v { width: 56px; }
.music { width: 77px; margin-left: -2px; border: solid #dadada; border-width: 0 1px; }
.up { position: absolute; right: 29px; top: 9px; }
.help { position: absolute; right: 3px; top: 4px; width: 16px; height: 16px; border-radius: 50%; background: #0f5fb0; color: #fff; font: 700 12px/16px "Noto Sans", sans-serif; text-align: center; }
.ribbon { height: 109px; flex: none; display: flex; background: #f5f5f5; border-bottom: 1px solid #dadada; }
.grp { display: flex; flex-direction: column; border-right: 1px solid #dcdcdc; margin: 2px 0; height: 103px; }
.g1 { width: 256px; } .g2 { width: 187px; padding-left: 2px; } .g3 { width: 137px; } .g4 { width: 127px; } .g5 { width: 86px; padding-left: 8px; }
.gbody { flex: 1; display: flex; min-height: 0; }
.glabel { text-align: center; height: 17px; line-height: 18px; color: #555; }
.big { display: flex; flex-direction: column; align-items: center; padding-top: 7px; line-height: 17px; text-align: center; flex: none; }
.bi { width: 26px; height: 30px; margin-bottom: 4px; }
.off { color: #8a8a8a; }
.c66 { width: 66px; } .c28 { width: 28px; } .c56 { width: 56px; } .c44 { width: 43px; } .c38 { width: 38px; } .c40 { width: 40px; } .c50 { width: 50px; }
.cut { display: flex; align-items: center; gap: 3px; color: #222; margin-top: 4px; }
.dn { margin-top: 2px; }
.rsep { width: 1px; height: 54px; background: #dcdcdc; margin: 14px 4px 0 5px; flex: none; }
.c38 + .c40 { margin-left: 2px; }
.small { display: flex; flex-direction: column; padding-top: 3px; }
.sp5 { padding-left: 5px; }
.sm { display: flex; align-items: center; gap: 3px; height: 22px; }
.g4 .small { padding-top: 4px; }
.g4 .small .sm { height: 25px; }
.ml4 { margin-left: 4px; }
.addr { height: 35px; flex: none; display: flex; align-items: flex-start; padding-top: 5px; position: relative; }
.nv { width: 14px; height: 14px; margin-top: 4px; }
.back { margin-left: 13px; }
.fwd { margin-left: 16px; }
.nd { margin: 7px 0 0 11px; }
.upb { margin-left: 10px; }
.pathbox { margin-left: 7px; width: 585px; height: 22px; border: 1px solid #d9d9d9; display: flex; align-items: center; padding-left: 4px; gap: 8px; color: #333; }
.crumb { color: #777; }
.last { margin-left: 3px; }
.pdn { position: absolute; left: 680px; top: 12px; }
.refresh { width: 18px; height: 22px; border: 1px solid #d9d9d9; border-left: 0; text-align: center; line-height: 20px; color: #777; font-size: 13px; }
.search { margin-left: 12px; width: 234px; height: 22px; border: 1px solid #d9d9d9; display: flex; align-items: center; justify-content: space-between; padding: 0 8px; color: #777; }
.ex-body { flex: 1; min-height: 0; display: flex; }
.tree { width: 102px; flex: none; overflow: hidden; display: flex; flex-direction: column; }
.ti { height: 24px; flex: none; display: flex; align-items: center; padding-left: 33px; overflow: hidden; }
.ti.sel { background: #d9d9de; }
.tic { width: 16px; height: 14px; margin-right: 6px; }
.treebar { width: 15px; flex: none; background: #f3f3f3; position: relative; height: 267px; display: flex; flex-direction: column; justify-content: space-between; align-items: center; padding: 8px 0 4px; }
.tb-thumb { position: absolute; left: 0; top: 164px; width: 15px; height: 51px; background: #c0bfb6; }
.files { padding: 6px 0 0 19px; }
.frow { width: 480px; height: 19px; margin-bottom: 3px; display: flex; align-items: center; gap: 2px; padding-left: 4px; border: 1px solid transparent; color: #334; }
.picked { background: #cce8ff; border-color: #99d1ff; }
.fic { width: 15px; height: 17px; }
.ex-status { height: 23px; flex: none; display: flex; align-items: center; padding-left: 15px; color: #444; }
.exbar { width: 1px; height: 14px; background: #ddd; margin: 0 10px; }
.size { margin-left: 9px; }
.stamp { position: absolute; left: 2140px; top: 1150px; width: 420px; height: 210px; pointer-events: none; }
.stamp-t { font: 700 188px "Noto Sans CJK SC", sans-serif; fill: #f4ff00; stroke: #000; stroke-width: 14px; paint-order: stroke; stroke-linejoin: round; filter: drop-shadow(4px 4px 2px rgba(0,0,0,.55)); }
```
